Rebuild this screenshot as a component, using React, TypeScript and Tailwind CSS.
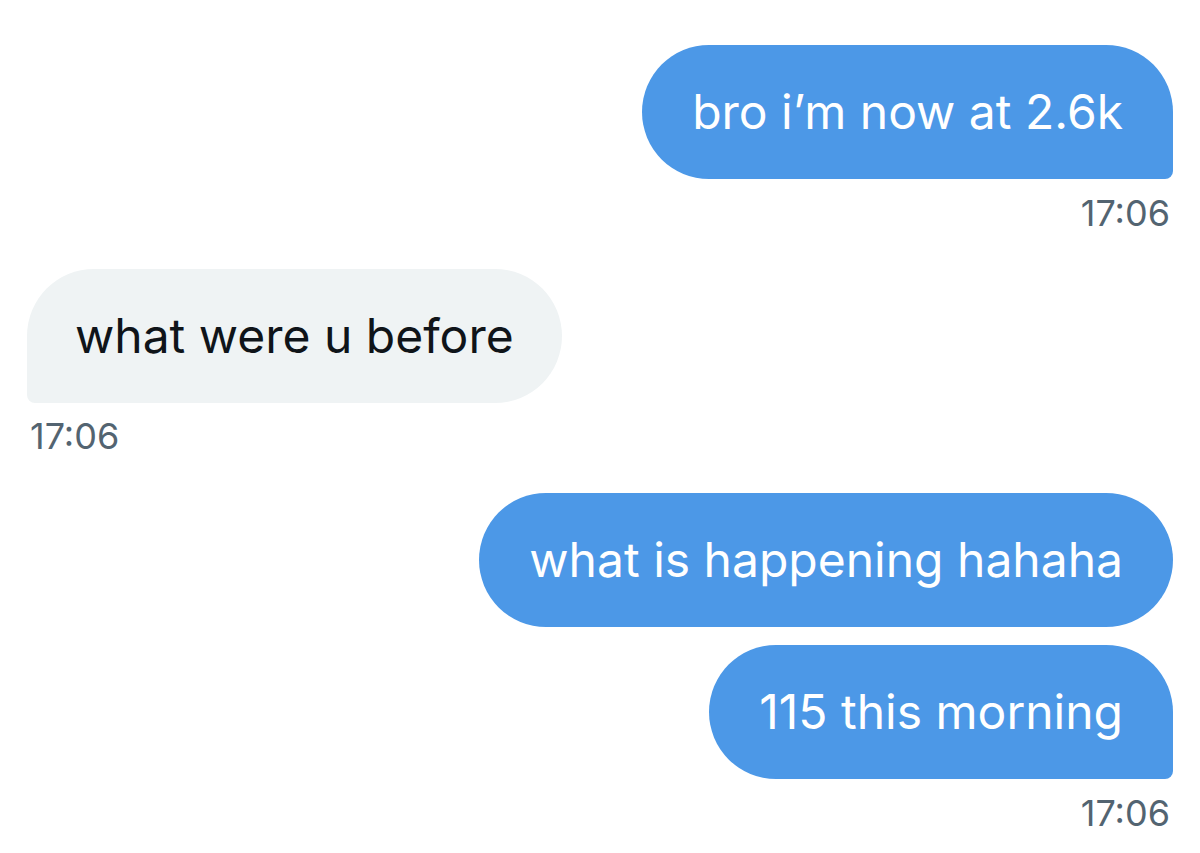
export default function App() {
  return (
    <div
      className="w-[1200px] h-[853px] overflow-hidden bg-white flex flex-col"
      style={{ fontFamily: "Inter, 'Liberation Sans', sans-serif" }}
    >
      <div className="-mt-[31px] pr-[30px] text-right text-[36px] leading-none text-[#536471]">17:06</div>

      <div className="mt-[40px] flex justify-end pr-[27px]">
        <div className="h-[134px] flex items-center px-[50px] bg-[#4c98e7] text-white text-[48px] rounded-[67px] rounded-br-[8px]">
          bro i’m now at 2.6k
        </div>
      </div>
      <div className="mt-[16px] pr-[30px] text-right text-[36px] leading-none text-[#536471]">17:06</div>

      <div className="mt-[38px] flex justify-start pl-[27px]">
        <div className="h-[134px] flex items-center px-[48px] bg-[#eff3f4] text-[#0f1419] text-[48px] rounded-[67px] rounded-bl-[8px]">
          what were u before
        </div>
      </div>
      <div className="mt-[15px] pl-[30px] text-left text-[36px] leading-none text-[#536471]">17:06</div>

      <div className="mt-[39px] flex justify-end pr-[27px]">
        <div className="h-[134px] flex items-center px-[50px] bg-[#4c98e7] text-white text-[48px] rounded-[67px]">
          what is happening hahaha
        </div>
      </div>
      <div className="mt-[18px] flex justify-end pr-[27px]">
        <div className="h-[134px] flex items-center px-[50px] bg-[#4c98e7] text-white text-[48px] rounded-[67px] rounded-br-[8px]">
          115 this morning
        </div>
      </div>
      <div className="mt-[16px] pr-[30px] text-right text-[36px] leading-none text-[#536471]">17:06</div>
    </div>
  );
}
